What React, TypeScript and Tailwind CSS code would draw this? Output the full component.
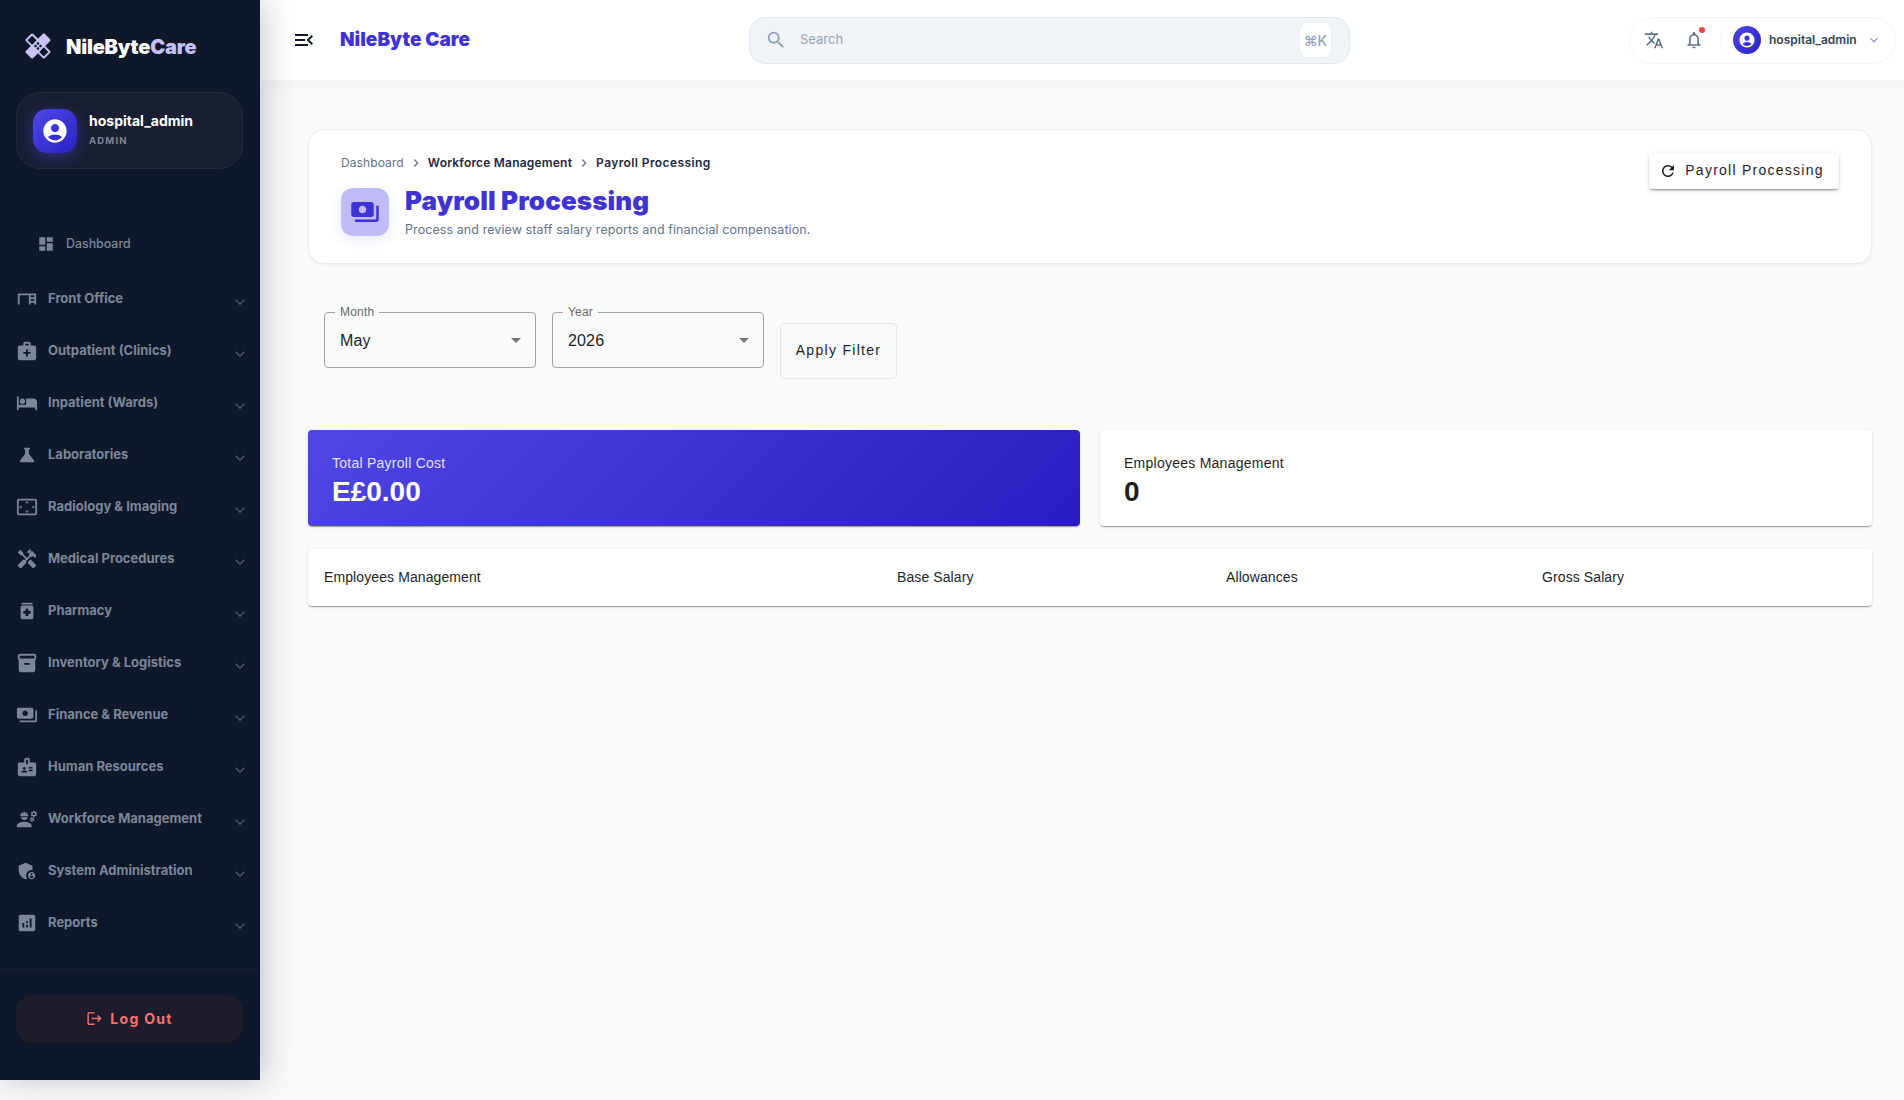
import { ReactNode } from "react";
import {
  MdAccountCircle,
  MdAdminPanelSettings,
  MdAnalytics,
  MdArrowDropDown,
  MdBadge,
  MdChevronRight,
  MdDashboard,
  MdDesk,
  MdEngineering,
  MdExpandMore,
  MdHandyman,
  MdHealing,
  MdHotel,
  MdInventory2,
  MdLogout,
  MdMedicalServices,
  MdMedication,
  MdMenuOpen,
  MdNotificationsNone,
  MdOutlineSearch,
  MdPayments,
  MdRefresh,
  MdScience,
  MdSettingsOverscan,
  MdTranslate,
} from "react-icons/md";

const NAV_ITEMS = [
  { label: "Front Office", icon: <MdDesk /> },
  { label: "Outpatient (Clinics)", icon: <MdMedicalServices /> },
  { label: "Inpatient (Wards)", icon: <MdHotel /> },
  { label: "Laboratories", icon: <MdScience /> },
  { label: "Radiology & Imaging", icon: <MdSettingsOverscan /> },
  { label: "Medical Procedures", icon: <MdHandyman /> },
  { label: "Pharmacy", icon: <MdMedication /> },
  { label: "Inventory & Logistics", icon: <MdInventory2 /> },
  { label: "Finance & Revenue", icon: <MdPayments /> },
  { label: "Human Resources", icon: <MdBadge /> },
  { label: "Workforce Management", icon: <MdEngineering /> },
  { label: "System Administration", icon: <MdAdminPanelSettings /> },
  { label: "Reports", icon: <MdAnalytics /> },
];

const NavRow = ({ label, icon }: { label: string; icon: ReactNode }) => (
  <div className="flex h-[52px] items-center pl-[16px] pr-[10px]">
    <span className="flex w-[32px] shrink-0 items-center text-[22px] text-[#7b8798]">{icon}</span>
    <span className="flex-1 text-[13px] font-bold text-[#7b8798]">{label}</span>
    <MdExpandMore className="mt-[5px] text-[20px] text-[#4b5563]" />
  </div>
);

const Sidebar = () => (
  <aside className="z-10 flex h-full w-[260px] shrink-0 flex-col bg-[#0f172a] shadow-[4px_0_30px_rgba(15,23,42,0.24)]">
    <div className="flex h-[92px] items-center pl-[23px]">
      <MdHealing className="text-[30px] text-[#c7c4f5]" />
      <span className="ml-[13px] pt-[1px] text-[20px] font-black tracking-[-0.2px] text-white">
        NileByte<span className="text-[#c3c0f6]">Care</span>
      </span>
    </div>

    <div className="ml-[16px] flex h-[77px] w-[227px] items-center rounded-[24px] border border-[#232a3d] bg-[#191e30] pl-[16px]">
      <div className="flex h-[44px] w-[44px] items-center justify-center rounded-[14px] bg-gradient-to-br from-[#4f46e5] to-[#2a1fc4] shadow-[0_4px_16px_rgba(79,70,229,0.45)]">
        <MdAccountCircle className="text-[28px] text-white" />
      </div>
      <div className="ml-[12px] pb-[1px]">
        <div className="text-[14px] font-bold leading-[18px] text-white">hospital_admin</div>
        <div className="mt-[4px] text-[9.5px] font-bold leading-[14px] tracking-[1.2px] text-[#7b8798]">ADMIN</div>
      </div>
    </div>

    <div className="mt-[49px] flex h-[52px] items-center pl-[37px]">
      <MdDashboard className="text-[18px] text-[#7b8798]" />
      <span className="ml-[11px] text-[12.4px] font-medium text-[#7b8798]">Dashboard</span>
    </div>

    <nav className="flex flex-col pt-[3px]">
      {NAV_ITEMS.map((item) => (
        <NavRow key={item.label} label={item.label} icon={item.icon} />
      ))}
    </nav>

    <div className="mt-[20px] flex-1 border-t border-[#161e30] px-[16px] pt-[25px]">
      <div className="flex h-[48px] w-[227px] items-center justify-center rounded-[16px] bg-[#1e1b2b] pb-[1px] text-[#f87171]">
        <MdLogout className="text-[17px]" />
        <span className="ml-[7px] text-[14px] font-bold tracking-[1.3px]">Log Out</span>
      </div>
    </div>
  </aside>
);

const Header = () => (
  <header className="relative flex h-[80px] shrink-0 items-center bg-white pl-[32px] pr-[8px] shadow-[0_4px_20px_rgba(15,23,42,0.03)]">
    <MdMenuOpen className="text-[24px] text-[#111827]" />
    <span className="ml-[24px] w-[130px] pt-[1px] text-[19px] font-black text-[#3f33d6]">NileByte Care</span>

    <div className="ml-[279px] flex h-[47px] w-[601px] items-center rounded-[16px] border border-[#e2e8f0] bg-[#f1f5f9] pl-[15px] pr-[17px]">
      <MdOutlineSearch className="text-[22px] text-[#94a3b8]" />
      <span className="ml-[13px] flex-1 text-[13px] text-[#94a3b8]">Search</span>
      <span className="flex h-[36px] w-[33px] items-center justify-center rounded-[8px] border border-[#eef2f7] bg-white text-[14px] font-medium text-[#94a3b8]">⌘K</span>
    </div>

    <div className="ml-auto flex h-[47px] w-[267px] items-center rounded-full border border-[#f1f5f9] bg-white pl-[14px]">
      <MdTranslate className="text-[20px] text-[#64748b]" />
      <div className="relative ml-[20px] flex">
        <MdNotificationsNone className="text-[20px] text-[#64748b]" />
        <span className="absolute right-[-1px] top-[-3px] h-[6px] w-[6px] rounded-full bg-[#ef4444]" />
      </div>
      <span className="ml-[17px] h-[20px] w-px bg-[#f1f5f9]" />
      <div className="ml-[11px] flex h-[28px] w-[28px] items-center justify-center rounded-full bg-gradient-to-br from-[#4f46e5] to-[#2a1fc4]">
        <MdAccountCircle className="text-[18px] text-white" />
      </div>
      <span className="ml-[8px] text-[12px] font-semibold text-[#334155]">hospital_admin</span>
      <MdExpandMore className="ml-[9px] text-[16px] text-[#94a3b8]" />
    </div>
  </header>
);

const SelectBox = ({ label, value }: { label: string; value: string }) => (
  <div className="relative flex h-[56px] w-[212px] items-center rounded-[4px] border border-[#a3a3a3] pl-[15px] pr-[7px] font-['Liberation_Sans',sans-serif]">
    <span className="absolute left-[10px] top-[-8px] bg-[#f9fafb] px-[5px] text-[12px] leading-[14px] tracking-[0.2px] text-[#666]">{label}</span>
    <span className="flex-1 pt-[1px] text-[16px] tracking-[0.15px] text-[#1f1f1f]">{value}</span>
    <MdArrowDropDown className="text-[24px] text-[#757575]" />
  </div>
);

const PayrollPage = () => (
  <main className="flex-1 pl-[48px] pr-[32px] pt-[49px]">
    <section className="flex h-[135px] items-start justify-between rounded-[16px] border border-[#e8edf3] bg-white pl-[32px] pr-[32px] shadow-[0_1px_3px_rgba(15,23,42,0.06)]">
      <div className="pt-[25px]">
        <div className="flex h-[16px] items-center text-[12px] font-semibold tracking-[0.2px]">
          <span className="font-normal tracking-[0.1px] text-[#64748b]">Dashboard</span>
          <MdChevronRight className="mx-[4px] text-[16px] text-[#64748b]" />
          <span className="text-[#1e293b]">Workforce Management</span>
          <MdChevronRight className="mx-[4px] text-[16px] text-[#64748b]" />
          <span className="tracking-[0.4px] text-[#1e293b]">Payroll Processing</span>
        </div>
        <div className="mt-[15px] flex items-center">
          <div className="flex h-[48px] w-[48px] items-center justify-center rounded-[12px] bg-[#c0bcf6] shadow-[0_4px_12px_rgba(79,70,229,0.12)]">
            <MdPayments className="text-[30px] text-[#3f33d6]" />
          </div>
          <div className="ml-[16px]">
            <h1 className="text-[26px] font-black leading-[30px] tracking-[0.1px] text-[#3f33d6]">Payroll Processing</h1>
            <p className="mt-[6px] text-[12.5px] leading-[16px] tracking-[0.08px] text-[#64748b]">Process and review staff salary reports and financial compensation.</p>
          </div>
        </div>
      </div>
      <button className="mt-[23px] flex h-[36px] w-[190px] items-center justify-center rounded-[4px] bg-white pb-[1px] pr-[5px] font-['Liberation_Sans',sans-serif] text-[14px] tracking-[1.25px] text-[#1f1f1f] shadow-[0_3px_1px_-2px_rgba(0,0,0,0.2),0_2px_2px_0_rgba(0,0,0,0.14),0_1px_5px_0_rgba(0,0,0,0.12)]">
        <MdRefresh className="mr-[8px] text-[18px]" />
        Payroll Processing
      </button>
    </section>

    <div className="mt-[48px] flex items-start gap-[16px] pl-[16px]">
      <SelectBox label="Month" value="May" />
      <SelectBox label="Year" value="2026" />
      <button className="mt-[11px] flex h-[56px] w-[117px] items-center justify-center rounded-[4px] border border-[#e5e7eb] pb-[1px] font-['Liberation_Sans',sans-serif] text-[14px] tracking-[1.3px] text-[#1f1f1f]">Apply Filter</button>
    </div>

    <div className="mt-[51px] flex gap-[20px] font-['Liberation_Sans',sans-serif]">
      <div className="h-[96px] flex-1 rounded-[4px] bg-[linear-gradient(135deg,#4f46e5,#2a1cc0)] pl-[24px] pt-[23px] text-white shadow-[0_2px_1px_-1px_rgba(0,0,0,0.2),0_1px_1px_0_rgba(0,0,0,0.14),0_1px_3px_0_rgba(0,0,0,0.12)]">
        <div className="text-[14px] leading-[20px] tracking-[0.25px] opacity-85">Total Payroll Cost</div>
        <div className="mt-[2px] text-[28px] font-bold leading-[34px]">E£0.00</div>
      </div>
      <div className="h-[96px] flex-1 rounded-[4px] bg-white pl-[24px] pt-[23px] text-[#1f1f1f] shadow-[0_2px_1px_-1px_rgba(0,0,0,0.2),0_1px_1px_0_rgba(0,0,0,0.14),0_1px_3px_0_rgba(0,0,0,0.12)]">
        <div className="text-[14px] leading-[20px] tracking-[0.25px]">Employees Management</div>
        <div className="mt-[2px] text-[28px] font-bold leading-[34px]">0</div>
      </div>
    </div>

    <div className="mt-[23px] grid h-[57px] grid-cols-[573px_329px_316px_1fr] items-center rounded-[4px] bg-white pl-[16px] font-['Liberation_Sans',sans-serif] text-[14px] tracking-[0.1px] text-[#1f1f1f] shadow-[0_2px_1px_-1px_rgba(0,0,0,0.2),0_1px_1px_0_rgba(0,0,0,0.14),0_1px_3px_0_rgba(0,0,0,0.12)]">
      <span>Employees Management</span>
      <span>Base Salary</span>
      <span>Allowances</span>
      <span>Gross Salary</span>
    </div>
  </main>
);

export default function App() {
  return (
    <div className="h-[1100px] bg-[#f9fafb] font-['Inter',sans-serif]">
      <div className="flex h-[1080px]">
        <Sidebar />
        <div className="flex min-w-0 flex-1 flex-col">
          <Header />
          <PayrollPage />
        </div>
      </div>
    </div>
  );
}
